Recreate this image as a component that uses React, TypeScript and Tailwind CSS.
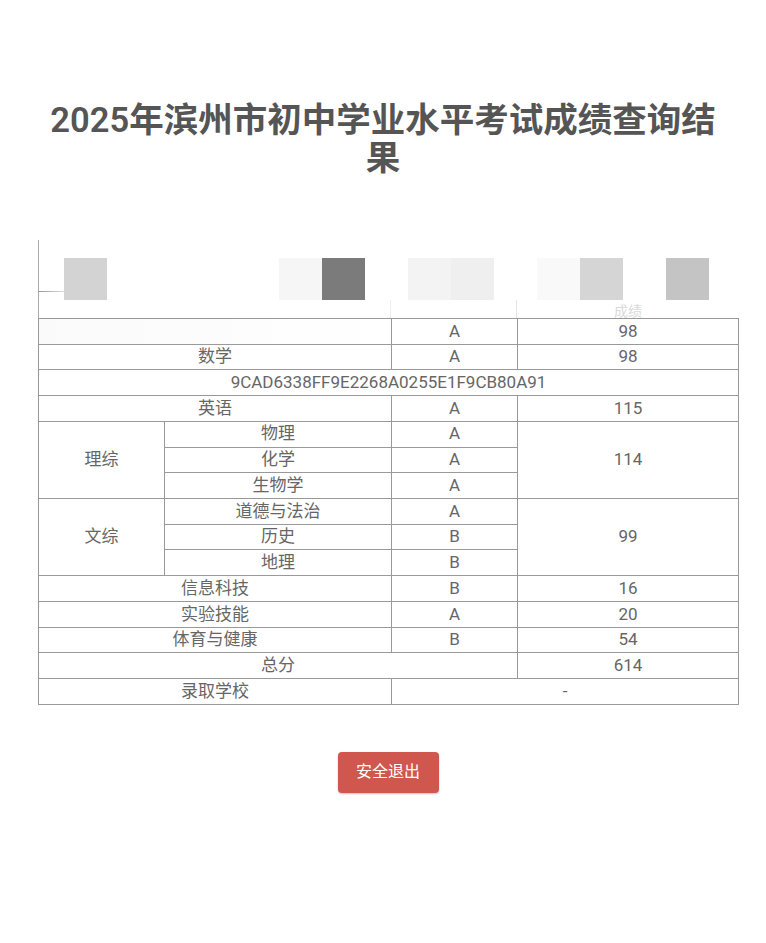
const mosaic = [
  "bg-[#d3d3d3]", "bg-white", "bg-white", "bg-white", "bg-white",
  "bg-[#f6f6f6]", "bg-[#7b7b7b]", "bg-white", "bg-[#f3f3f3]", "bg-[#efefef]",
  "bg-white", "bg-[#f9f9f9]", "bg-[#d5d5d5]", "bg-white", "bg-[#c4c4c4]",
];

const cell = "bg-white flex items-center justify-center";

export default function App() {
  return (
    <div
      className="min-h-screen bg-white"
      style={{ fontFamily: 'Roboto, "Noto Sans CJK SC", sans-serif' }}
    >
      {/* Title */}
      <h1 className="mx-auto pt-[101px] w-[680px] text-center text-[34.5px] leading-[38px] font-semibold text-[#555]">
        2025年滨州市初中学业水平考试成绩查询结果
      </h1>

      {/* Blurred header */}
      <div className="ml-[38px] mt-[63px] w-[701px] h-[78px] border-l border-[#aaa] flex flex-col">
        <div className="mt-[18px] h-[42px] flex overflow-hidden">
          <div className="w-[25px] shrink-0 pt-[33px]">
            <div className="h-px bg-gradient-to-r from-[#999] to-[#ddd]" />
          </div>
          {mosaic.map((c, i) => (
            <div key={i} className={`w-[43px] shrink-0 h-full ${c}`} />
          ))}
        </div>
        <div className="h-[18px] grid grid-cols-[125px_226px_125px_220px] gap-px">
          <div />
          <div className="border-r border-[#eee]" />
          <div className="border-r border-[#e4e4e4]" />
          <div className="flex items-end justify-center text-[14px] leading-none text-[#dadada] overflow-hidden">
            成绩
          </div>
        </div>
      </div>

      {/* Score table */}
      <div className="ml-[38px] w-[701px] bg-[#999] p-px grid grid-cols-[125px_226px_125px_220px] auto-rows-[24.73px] gap-px text-[17px] text-[#666]">
        <div className={`${cell} col-span-2 bg-gradient-to-r from-[#fafafa] to-white`} />
        <div className={cell}>A</div>
        <div className={cell}>98</div>

        <div className={`${cell} col-span-2`}>数学</div>
        <div className={cell}>A</div>
        <div className={cell}>98</div>

        <div className={`${cell} col-span-4`}>9CAD6338FF9E2268A0255E1F9CB80A91</div>

        <div className={`${cell} col-span-2`}>英语</div>
        <div className={cell}>A</div>
        <div className={cell}>115</div>

        <div className={`${cell} row-span-3`}>理综</div>
        <div className={cell}>物理</div>
        <div className={cell}>A</div>
        <div className={`${cell} row-span-3`}>114</div>
        <div className={cell}>化学</div>
        <div className={cell}>A</div>
        <div className={cell}>生物学</div>
        <div className={cell}>A</div>

        <div className={`${cell} row-span-3`}>文综</div>
        <div className={cell}>道德与法治</div>
        <div className={cell}>A</div>
        <div className={`${cell} row-span-3`}>99</div>
        <div className={cell}>历史</div>
        <div className={cell}>B</div>
        <div className={cell}>地理</div>
        <div className={cell}>B</div>

        <div className={`${cell} col-span-2`}>信息科技</div>
        <div className={cell}>B</div>
        <div className={cell}>16</div>

        <div className={`${cell} col-span-2`}>实验技能</div>
        <div className={cell}>A</div>
        <div className={cell}>20</div>

        <div className={`${cell} col-span-2`}>体育与健康</div>
        <div className={cell}>B</div>
        <div className={cell}>54</div>

        <div className={`${cell} col-span-3`}>总分</div>
        <div className={cell}>614</div>

        <div className={`${cell} col-span-2`}>录取学校</div>
        <div className={`${cell} col-span-2`}>-</div>
      </div>

      {/* Logout */}
      <div className="flex justify-center pl-[10px] mt-[47px]">
        <button className="w-[101px] h-[41px] rounded-[4px] bg-[#d0574e] text-white text-[16px] shadow-[0_1px_2px_rgba(0,0,0,0.25)]">
          安全退出
        </button>
      </div>
    </div>
  );
}
